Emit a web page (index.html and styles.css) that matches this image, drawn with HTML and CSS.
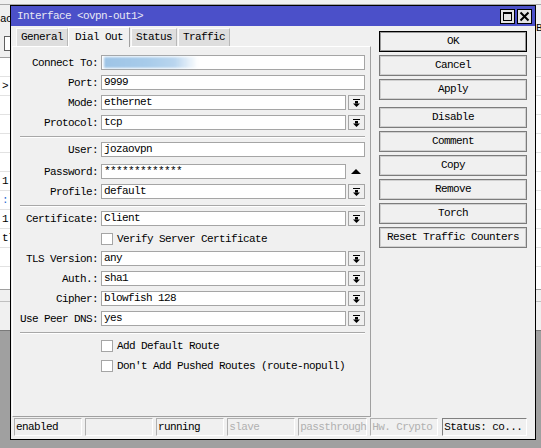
FILE: index.html
```html
<!DOCTYPE html>
<html>
<head>
<meta charset="utf-8">
<link rel="stylesheet" href="styles.css">
</head>
<body>
<div class="desk">
  <div class="bgwin">
    <div class="bg-top"></div>
    <div class="bg-tabs">ac</div>
    <div class="bg-tool"><span class="bg-icon"></span></div>
    <div class="bg-list">
      <div class="bg-row"></div>
      <div class="bg-row">&gt;</div>
      <div class="bg-row"></div>
      <div class="bg-row"></div>
      <div class="bg-row"></div>
      <div class="bg-row"></div>
      <div class="bg-row">1</div>
      <div class="bg-row blue">:</div>
      <div class="bg-row">1</div>
      <div class="bg-row">tl</div>
      <div class="bg-row"></div>
    </div>
    <div class="bg-foot"></div>
    <div class="bg-right">B</div>
  </div>

  <div class="win">
    <div class="titlebar">
      <span class="title">Interface &lt;ovpn-out1&gt;</span>
      <span class="tbtns">
        <span class="tbtn"><svg width="13" height="13" viewBox="0 0 13 13"><rect x="2.5" y="2.5" width="8" height="8" fill="none" stroke="#000"/><line x1="2" y1="3.5" x2="11" y2="3.5" stroke="#000"/></svg></span>
        <span class="tbtn"><svg width="13" height="13" viewBox="0 0 13 13"><path d="M2.5 2.5 L10.5 10.5 M10.5 2.5 L2.5 10.5" stroke="#000" stroke-width="2"/></svg></span>
      </span>
    </div>
    <div class="wbody">
      <div class="main">
        <div class="leftcol">
          <div class="tabs">
            <span class="tab">General</span>
            <span class="tab active">Dial Out</span>
            <span class="tab">Status</span>
            <span class="tab">Traffic</span>
          </div>
          <div class="panel">
            <div class="row"><span class="label">Connect To:</span><span class="field"><span class="redact"></span></span></div>
            <div class="row"><span class="label">Port:</span><span class="field">9999</span></div>
            <div class="row"><span class="label">Mode:</span><span class="field">ethernet</span><span class="dd"><svg width="7" height="8" viewBox="0 0 7 8"><rect x="0" y="0" width="7" height="1"/><rect x="2" y="2" width="3" height="2.5"/><polygon points="0,4.5 7,4.5 3.5,8"/></svg></span></div>
            <div class="row"><span class="label">Protocol:</span><span class="field">tcp</span><span class="dd"><svg width="7" height="8" viewBox="0 0 7 8"><rect x="0" y="0" width="7" height="1"/><rect x="2" y="2" width="3" height="2.5"/><polygon points="0,4.5 7,4.5 3.5,8"/></svg></span></div>
            <div class="sep"></div>
            <div class="row"><span class="label">User:</span><span class="field">jozaovpn</span></div>
            <div class="row pw"><span class="label">Password:</span><span class="field">*************</span><span class="tri"><svg width="10" height="5" viewBox="0 0 10 5"><polygon points="0,5 10,5 5,0"/></svg></span></div>
            <div class="row"><span class="label">Profile:</span><span class="field">default</span><span class="dd"><svg width="7" height="8" viewBox="0 0 7 8"><rect x="0" y="0" width="7" height="1"/><rect x="2" y="2" width="3" height="2.5"/><polygon points="0,4.5 7,4.5 3.5,8"/></svg></span></div>
            <div class="sep"></div>
            <div class="row"><span class="label">Certificate:</span><span class="field">Client</span><span class="dd"><svg width="7" height="8" viewBox="0 0 7 8"><rect x="0" y="0" width="7" height="1"/><rect x="2" y="2" width="3" height="2.5"/><polygon points="0,4.5 7,4.5 3.5,8"/></svg></span></div>
            <div class="row cbrow"><span class="cb"></span><span class="cbl">Verify Server Certificate</span></div>
            <div class="row"><span class="label">TLS Version:</span><span class="field">any</span><span class="dd"><svg width="7" height="8" viewBox="0 0 7 8"><rect x="0" y="0" width="7" height="1"/><rect x="2" y="2" width="3" height="2.5"/><polygon points="0,4.5 7,4.5 3.5,8"/></svg></span></div>
            <div class="row"><span class="label">Auth.:</span><span class="field">sha1</span><span class="dd"><svg width="7" height="8" viewBox="0 0 7 8"><rect x="0" y="0" width="7" height="1"/><rect x="2" y="2" width="3" height="2.5"/><polygon points="0,4.5 7,4.5 3.5,8"/></svg></span></div>
            <div class="row"><span class="label">Cipher:</span><span class="field">blowfish 128</span><span class="dd"><svg width="7" height="8" viewBox="0 0 7 8"><rect x="0" y="0" width="7" height="1"/><rect x="2" y="2" width="3" height="2.5"/><polygon points="0,4.5 7,4.5 3.5,8"/></svg></span></div>
            <div class="row"><span class="label">Use Peer DNS:</span><span class="field">yes</span><span class="dd"><svg width="7" height="8" viewBox="0 0 7 8"><rect x="0" y="0" width="7" height="1"/><rect x="2" y="2" width="3" height="2.5"/><polygon points="0,4.5 7,4.5 3.5,8"/></svg></span></div>
            <div class="sep"></div>
            <div class="row cbrow"><span class="cb"></span><span class="cbl">Add Default Route</span></div>
            <div class="row cbrow"><span class="cb"></span><span class="cbl">Don't Add Pushed Routes (route-nopull)</span></div>
          </div>
        </div>
        <div class="btncol">
          <div class="btn default">OK</div>
          <div class="btn">Cancel</div>
          <div class="btn gap">Apply</div>
          <div class="btn">Disable</div>
          <div class="btn">Comment</div>
          <div class="btn">Copy</div>
          <div class="btn">Remove</div>
          <div class="btn">Torch</div>
          <div class="btn">Reset Traffic Counters</div>
        </div>
      </div>
      <div class="status">
        <span class="cell">enabled</span>
        <span class="cell"></span>
        <span class="cell">running</span>
        <span class="cell dim">slave</span>
        <span class="cell dim">passthrough</span>
        <span class="cell dim">Hw. Crypto</span>
        <span class="cell last">Status: co...</span>
      </div>
    </div>
  </div>
</div>
</body>
</html>
```
FILE: styles.css
```css
* { box-sizing: border-box; }
html, body { margin: 0; padding: 0; }
body {
  width: 541px;
  height: 448px;
  overflow: hidden;
  background: #a0a0a0;
  font-family: "Liberation Mono", "DejaVu Sans Mono", monospace;
  font-size: 11px;
  letter-spacing: -0.6px;
  color: #000;
}
.desk { position: relative; width: 541px; height: 448px; }

/* background window */
.bgwin {
  position: absolute;
  left: 0; top: 0;
  width: 541px; height: 331px;
  background: #f0f0f0;
  border-bottom: 1px solid #7a7a7a;
}
.bg-top { height: 5px; border-bottom: 1px solid #a8a8a8; }
.bg-tabs { height: 24px; padding: 7px 0 0 0; line-height: 14px; }
.bg-tool { height: 29px; border-bottom: 1px solid #a0a0a0; padding: 7px 0 0 4px; }
.bg-icon { display: block; width: 10px; height: 15px; border: 1px solid #606060; border-right: none; background: #fff; }
.bg-list { background: #fff; height: 232px; border-bottom: 1px solid #a0a0a0; }
.bg-row { height: 19px; border-bottom: 1px solid #e2e2e2; padding-left: 2px; line-height: 18px; }
.bg-row.blue { color: #2a6bd0; }
.bg-foot { height: 12px; border-bottom: 1px solid #c0c0c0; }
.bg-right { position: absolute; left: 536px; top: 22px; }

/* main window */
.win {
  position: absolute;
  left: 10px; top: 5px;
  width: 526px; height: 435px;
  border: 1px solid #000;
  background: #f0f0f0;
  display: flex;
  flex-direction: column;
}
.titlebar {
  height: 20px;
  background: #4b50c9;
  color: #e8e8f4;
  display: flex;
  align-items: center;
  justify-content: space-between;
  padding: 0 3px 0 6px;
}
.tbtns { display: flex; gap: 2px; }
.tbtn {
  width: 15px; height: 15px;
  border: 1px solid #000;
  background: #e4e4e4;
  display: flex;
}
.wbody {
  flex: 1;
  display: flex;
  flex-direction: column;
  padding: 1px 8px 3px 1px;
}
.main { height: 390px; display: flex; }
.leftcol { width: 359px; display: flex; flex-direction: column; }
.tabs {
  height: 19px;
  display: flex;
  align-items: flex-end;
  padding-left: 4px;
  position: relative;
  z-index: 1;
}
.tab {
  height: 18px;
  padding: 0 4px;
  background: #dedede;
  border: 1px solid #b8b8b8;
  border-top-color: #fafafa;
  border-left-color: #fafafa;
  border-bottom: none;
  line-height: 17px;
  margin-left: 1px;
}
.tab:first-child { margin-left: 0; }
.tab.active {
  height: 20px;
  margin-bottom: -1px;
  margin-left: 0;
  padding: 0 6px;
  background: #f0f0f0;
  border-color: #fff #a0a0a0 #f0f0f0 #fff;
  line-height: 18px;
}
.panel {
  flex: 1;
  display: flex;
  flex-direction: column;
  border: 1px solid;
  border-color: #fff #a0a0a0 #a0a0a0 #fff;
  padding: 8px 5px 0 0;
}
.row { display: flex; align-items: center; height: 15px; flex: none; margin-bottom: 5px; }
.row.pw { margin-top: 2px; }
.label { width: 85px; margin-right: 3px; text-align: right; white-space: nowrap; }
.field {
  flex: 1;
  height: 15px;
  border: 1px solid #a5a5a5;
  background: #fff;
  padding-left: 2px;
  line-height: 13px;
  white-space: nowrap;
  position: relative;
}
.redact {
  position: absolute;
  left: 2px; top: 1px;
  width: 94px; height: 11px;
  background: linear-gradient(90deg, #9ec4e6 0%, #a7cbea 45%, #b9d5ee 75%, rgba(210,228,244,0) 100%);
  filter: blur(1px);
}
.dd {
  width: 17px;
  height: 15px;
  margin-left: 2px;
  border: 1px solid #a5a5a5;
  background: #f0f0f0;
  display: flex;
  align-items: center;
  justify-content: center;
}
.tri { width: 19px; display: flex; justify-content: center; }
.sep {
  flex: none;
  height: 2px;
  border-top: 1px solid #a8a8a8;
  border-bottom: 1px solid #fff;
  margin: 1px 0 4px 7px;
}
.cbrow { align-items: flex-start; padding-left: 88px; }
.cb {
  width: 12px; height: 12px;
  margin-top: 2px;
  border: 1px solid #a5a5a5;
  background: #fff;
}
.cbl { margin-left: 4px; line-height: 16px; }

.btncol { width: 148px; margin-left: 8px; padding-top: 4px; }
.btn {
  height: 21px;
  margin-bottom: 3px;
  border: 1px solid #7c7c7c;
  box-shadow: inset 0 0 0 1px #d0d0d0;
  background: #f0f0f0;
  text-align: center;
  line-height: 19px;
}
.btn.default { border-color: #000; box-shadow: inset 0 0 0 1px #9a9a9a; }
.btn.gap { margin-bottom: 7px; }

.status { height: 18px; margin-top: 1px; display: flex; gap: 3px; padding-left: 2px; }
.cell {
  width: 69px;
  height: 18px;
  border: 1px solid;
  border-color: #b0b0b0 #fff #fff #b0b0b0;
  padding-left: 1px;
  line-height: 16px;
  white-space: nowrap;
  overflow: visible;
}
.cell.dim { color: #b0b0b0; }
.cell.last { width: 86px; margin-left: 1px; border-color: #808080 #fff #fff #808080; }
```
